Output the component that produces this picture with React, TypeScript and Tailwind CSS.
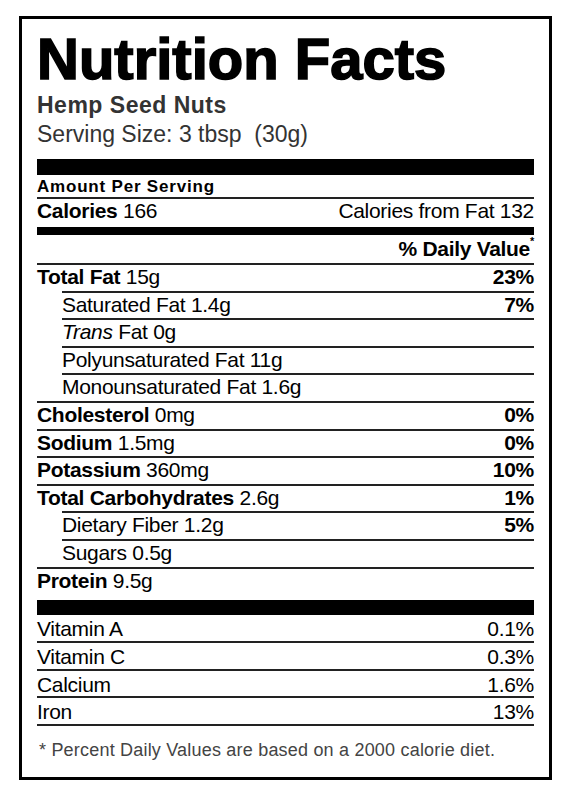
import React from "react";

type Row = { label: string; value?: string; pct?: string; sub?: boolean; italic?: string };

const rows: Row[] = [
  { label: "Total Fat", value: "15g", pct: "23%" },
  { label: "Saturated Fat", value: "1.4g", pct: "7%", sub: true },
  { label: "Fat", value: "0g", sub: true, italic: "Trans" },
  { label: "Polyunsaturated Fat", value: "11g", sub: true },
  { label: "Monounsaturated Fat", value: "1.6g", sub: true },
  { label: "Cholesterol", value: "0mg", pct: "0%" },
  { label: "Sodium", value: "1.5mg", pct: "0%" },
  { label: "Potassium", value: "360mg", pct: "10%" },
  { label: "Total Carbohydrates", value: "2.6g", pct: "1%" },
  { label: "Dietary Fiber", value: "1.2g", pct: "5%", sub: true },
  { label: "Sugars", value: "0.5g", sub: true },
  { label: "Protein", value: "9.5g" },
];

const vitamins = [
  ["Vitamin A", "0.1%"],
  ["Vitamin C", "0.3%"],
  ["Calcium", "1.6%"],
  ["Iron", "13%"],
];

export default function App() {
  return (
    <div className="min-h-[800px] bg-white pt-[16px] font-['Liberation_Sans',Arial,sans-serif] text-black">
      <div className="ml-[19px] w-[533px] border-[3px] border-black px-[15px] pt-[11px] pb-[16px]">
        {/* header */}
        <h1 className="text-[58px] leading-[57px] font-bold whitespace-nowrap [-webkit-text-stroke:1.6px_#000]">
          Nutrition Facts
        </h1>
        <div className="mt-[6px] text-[23px] leading-[24px] font-bold tracking-[0.5px] text-[#333]">
          Hemp Seed Nuts
        </div>
        <div className="mt-[4px] text-[23px] leading-[26px] text-[#333] whitespace-pre">
          Serving Size: 3 tbsp  (30g)
        </div>

        <div className="mt-[12px] h-[16px] bg-black" />

        <div className="h-[24px] border-b-2 border-[#222] pt-[2px] text-[17px] leading-[20px] font-bold tracking-[0.8px]">
          Amount Per Serving
        </div>
        <div className="flex h-[28px] justify-between text-[21px] leading-[24px] tracking-[-0.3px]">
          <span>
            <b>Calories</b> 166
          </span>
          <span>Calories from Fat 132</span>
        </div>
        <div className="h-[8px] bg-black" />
        <div className="h-[28px] pt-[2px] text-right text-[21px] leading-[24px] font-bold tracking-[-0.3px]">
          % Daily Value<sup className="text-[11px] align-[6px]">*</sup>
        </div>

        {/* nutrients */}
        {rows.map((r) => (
          <div
            key={r.label + r.value}
            className={
              "flex h-[27.6px] justify-between border-t-2 border-[#222] text-[21px] leading-[24px] tracking-[-0.3px] " +
              (r.sub ? "ml-[25px]" : "")
            }
          >
            <span>
              {r.italic && <i>{r.italic} </i>}
              {r.sub ? r.label : <b>{r.label}</b>} {r.value}
            </span>
            {r.pct && <b>{r.pct}</b>}
          </div>
        ))}

        <div className="mt-[6px] h-[15px] bg-black" />

        {vitamins.map(([name, pct]) => (
          <div
            key={name}
            className="flex h-[27.7px] justify-between border-b-2 border-[#222] pt-[2px] text-[21px] leading-[24px] tracking-[-0.3px]"
          >
            <span>{name}</span>
            <span>{pct}</span>
          </div>
        ))}

        <p className="mt-[13px] pl-[2px] text-[18px] leading-[22px] tracking-[0.2px] text-[#444]">
          * Percent Daily Values are based on a 2000 calorie diet.
        </p>
      </div>
    </div>
  );
}
